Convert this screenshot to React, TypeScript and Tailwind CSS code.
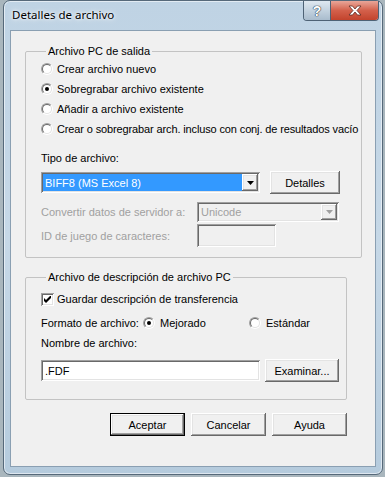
import React from 'react';

// classic 3D bevels (Windows classic look inside an Aero frame)
const raised =
  'shadow-[inset_-1px_-1px_0_#696969,inset_1px_1px_0_#fff,inset_-2px_-2px_0_#a0a0a0,inset_2px_2px_0_#e3e3e3]';
const sunken =
  'shadow-[inset_1px_1px_0_#a0a0a0,inset_-1px_-1px_0_#fff,inset_2px_2px_0_#696969,inset_-2px_-2px_0_#e3e3e3]';

function Radio({ checked }: { checked?: boolean }) {
  return (
    <span className="flex h-[12px] w-[12px] shrink-0 items-center justify-center rounded-full border border-t-[#a0a0a0] border-l-[#a0a0a0] border-r-white border-b-white">
      <span className="flex h-[10px] w-[10px] items-center justify-center rounded-full border border-t-[#696969] border-l-[#696969] border-r-[#e3e3e3] border-b-[#e3e3e3] bg-white">
        {checked && <span className="h-[4px] w-[4px] rounded-full bg-black" />}
      </span>
    </span>
  );
}

function RadioRow({ label, checked, tight }: { label: string; checked?: boolean; tight?: boolean }) {
  return (
    <div className="flex h-5 items-center gap-[4px] whitespace-nowrap">
      <Radio checked={checked} />
      <span className={tight ? 'tracking-[-0.13px]' : ''}>{label}</span>
    </div>
  );
}

function Checkbox() {
  return (
    <span className={`flex h-[13px] w-[13px] shrink-0 items-center justify-center bg-white ${sunken}`}>
      <svg width="7" height="7" viewBox="0 0 7 7">
        <path d="M0 2 L2 4 L7 -1 L7 2 L2 7 L0 5 Z" fill="#000" />
      </svg>
    </span>
  );
}

function DropButton({ disabled }: { disabled?: boolean }) {
  return (
    <div className={`flex h-full w-[16px] shrink-0 items-center justify-center bg-[#f0f0f0] ${raised}`}>
      <svg width="7" height="4" viewBox="0 0 7 4">
        <path d="M0 0 H7 L3.5 4 Z" fill={disabled ? '#a0a0a0' : '#000'} />
      </svg>
    </div>
  );
}

function Button({ label, w, def }: { label: string; w: string; def?: boolean }) {
  return (
    <button
      className={`flex h-[23px] items-center justify-center bg-[#f0f0f0] ${w} ${
        def ? 'border border-black' : ''
      } ${raised}`}
    >
      {label}
    </button>
  );
}

export default function App() {
  return (
    <div className="h-[477px] w-[385px] overflow-hidden bg-[#a9b6bd] font-['Liberation_Sans',Arial,sans-serif] text-[11px] leading-[14px] text-black">
      <div className="ml-[3px] flex h-[475px] w-[380px] flex-col rounded-[7px] border border-[#56697a] bg-gradient-to-b from-[#bfd3e4] via-[#c6d8e7] to-[#b5cbdd] shadow-[inset_0_0_0_1px_rgba(255,255,255,0.55)]">
        {/* title bar */}
        <div className="flex h-[29px] items-start">
          <span className="pl-[8px] pt-[6px] font-['Noto_Sans',sans-serif] text-[11.5px] leading-[16px] [text-shadow:0_0_6px_#fff,0_0_3px_#fff]">
            Detalles de archivo
          </span>
          <div className="ml-auto mr-[3px] flex h-[20px] overflow-hidden rounded-b-[4px] border border-t-0 border-[#4e6275]">
            <div className="flex w-[27px] items-center justify-center border-r border-[#4e6275] bg-gradient-to-b from-[#dfe8f0] via-[#c3d2df] to-[#a9bccd] font-['Liberation_Sans',sans-serif] text-[14px] font-bold text-white [text-shadow:0_0_1px_#2d3d4c,0_0_1px_#2d3d4c,0_0_1px_#2d3d4c]">
              ?
            </div>
            <div className="flex w-[47px] items-center justify-center bg-gradient-to-b from-[#e8a699] via-[#d3604b] to-[#c2432c]">
              <svg width="14" height="11" viewBox="0 0 14 11">
                <path
                  d="M1 1 L4.5 1 L7 4 L9.5 1 L13 1 L9 5.5 L13 10 L9.5 10 L7 7 L4.5 10 L1 10 L5 5.5 Z"
                  fill="#fff"
                  stroke="#5a2a22"
                  strokeWidth="0.8"
                  strokeLinejoin="round"
                />
              </svg>
            </div>
          </div>
        </div>

        {/* client area */}
        <div className="ml-[6px] flex h-[437px] w-[366px] flex-col border border-[#8a9fb2] bg-[#f0f0f0]">
          <fieldset className="ml-[14px] mt-[13px] w-[337px] rounded-[2px] border border-[#c3c3c3] pb-[10px] pl-[15px]">
            <legend className="ml-[5px] px-[2px] leading-[14px]">Archivo PC de salida</legend>
            <div className="flex flex-col pt-[1px]">
              <RadioRow label="Crear archivo nuevo" />
              <RadioRow label="Sobregrabar archivo existente" checked />
              <RadioRow label="Añadir a archivo existente" />
              <RadioRow label="Crear o sobregrabar arch. incluso con conj. de resultados vacío" tight />
            </div>
            <div className="mt-[12px]">Tipo de archivo:</div>
            <div className="mt-[6px] flex items-start gap-[10px]">
              <div className={`mt-[1px] flex h-[21px] w-[219px] bg-white p-[2px] ${sunken}`}>
                <div className="flex flex-1 items-center bg-[#3399ff] pl-[2px] text-white">BIFF8 (MS Excel 8)</div>
                <DropButton />
              </div>
              <Button label="Detalles" w="w-[70px]" />
            </div>
            <div className="mt-[8px] flex items-center">
              <span className="w-[156px] text-[#a0a0a0]">Convertir datos de servidor a:</span>
              <div className={`flex h-[20px] w-[142px] bg-[#f0f0f0] p-[2px] ${sunken}`}>
                <div className="flex flex-1 items-center pl-[2px] text-[#a0a0a0]">Unicode</div>
                <DropButton disabled />
              </div>
            </div>
            <div className="mt-[2px] flex items-center">
              <span className="w-[156px] text-[#a0a0a0]">ID de juego de caracteres:</span>
              <div className={`h-[23px] w-[79px] bg-[#f0f0f0] ${sunken}`} />
            </div>
          </fieldset>

          <fieldset className="ml-[14px] mt-[12px] w-[322px] rounded-[2px] border border-[#c3c3c3] pb-[17px] pl-[15px]">
            <legend className="ml-[5px] px-[2px] leading-[14px]">Archivo de descripción de archivo PC</legend>
            <div className="mt-[5px] flex h-5 items-center gap-[3px]">
              <Checkbox />
              <span>Guardar descripción de transferencia</span>
            </div>
            <div className="mt-[4px] flex h-5 items-center">
              <span className="w-[102px]">Formato de archivo:</span>
              <div className="flex w-[106px] items-center gap-[5px]">
                <Radio checked />
                <span>Mejorado</span>
              </div>
              <div className="flex items-center gap-[5px]">
                <Radio />
                <span>Estándar</span>
              </div>
            </div>
            <div className="mt-[3px]">Nombre de archivo:</div>
            <div className="mt-[9px] flex items-start gap-[5px]">
              <div className={`mt-[1px] flex h-[21px] w-[219px] items-center bg-white pl-[4px] ${sunken}`}>.FDF</div>
              <Button label="Examinar..." w="w-[74px]" />
            </div>
          </fieldset>

          <div className="ml-[99px] mt-[13px] flex gap-[6px]">
            <Button label="Aceptar" w="w-[75px]" def />
            <Button label="Cancelar" w="w-[75px]" />
            <Button label="Ayuda" w="w-[75px]" />
          </div>
        </div>
      </div>
    </div>
  );
}
